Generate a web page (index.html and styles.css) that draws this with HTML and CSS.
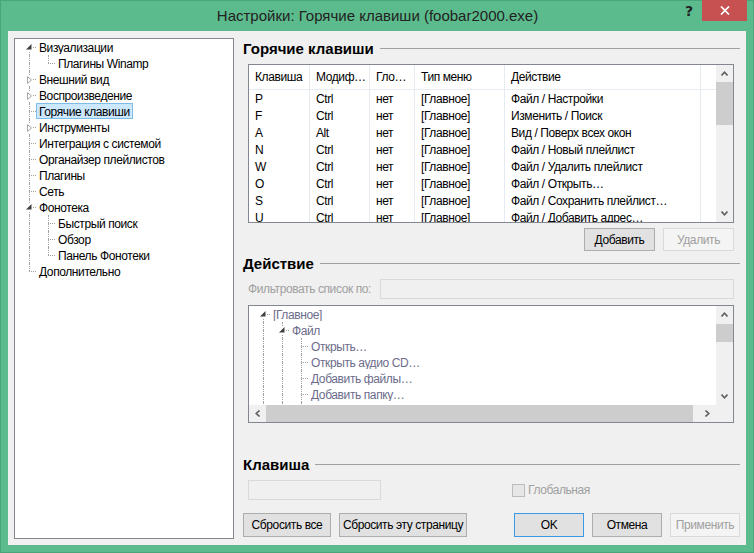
FILE: index.html
```html
<!DOCTYPE html>
<html lang="ru">
<head>
<meta charset="utf-8">
<title>Настройки: Горячие клавиши (foobar2000.exe)</title>
<link rel="stylesheet" href="styles.css">
</head>
<body>
<div class="window">
  <div class="titlebar">
    <div class="title">Настройки: Горячие клавиши (foobar2000.exe)</div>
    <div class="caption-btns">
      <div class="cap-help">?</div>
      <div class="cap-close"><svg width="10" height="9" viewBox="0 0 10 9"><path d="M1 0.5 L9 8.5 M9 0.5 L1 8.5" stroke="#fff" stroke-width="1.7" fill="none"/></svg></div>
    </div>
  </div>
  <div class="client">
    <div class="tree nav">
      <div class="trow"><span class="tc k f"><i class="a"></i><i class="b"></i><svg class="glyph" width="16" height="16" viewBox="0 0 16 16"><rect x="5" y="4" width="8" height="8" fill="#fff"/><path d="M11.5 5 L11.5 10.5 L6 10.5 Z" fill="#404040"/></svg></span><span class="lbl">Визуализации</span></div>
      <div class="trow"><span class="tc v"><i class="a"></i><i class="b"></i></span><span class="tc k l"><i class="a"></i><i class="b"></i></span><span class="lbl">Плагины Winamp</span></div>
      <div class="trow"><span class="tc k t"><i class="a"></i><i class="b"></i><svg class="glyph" width="16" height="16" viewBox="0 0 16 16"><rect x="5" y="4" width="8" height="10" fill="#fff"/><path d="M7.5 5.5 L7.5 12.5 L11.5 9 Z" fill="#fff" stroke="#a6a6a6" stroke-width="1"/></svg></span><span class="lbl">Внешний вид</span></div>
      <div class="trow"><span class="tc k t"><i class="a"></i><i class="b"></i><svg class="glyph" width="16" height="16" viewBox="0 0 16 16"><rect x="5" y="4" width="8" height="10" fill="#fff"/><path d="M7.5 5.5 L7.5 12.5 L11.5 9 Z" fill="#fff" stroke="#a6a6a6" stroke-width="1"/></svg></span><span class="lbl">Воспроизведение</span></div>
      <div class="trow"><span class="tc k t"><i class="a"></i><i class="b"></i></span><span class="lbl sel">Горячие клавиши</span></div>
      <div class="trow"><span class="tc k t"><i class="a"></i><i class="b"></i><svg class="glyph" width="16" height="16" viewBox="0 0 16 16"><rect x="5" y="4" width="8" height="10" fill="#fff"/><path d="M7.5 5.5 L7.5 12.5 L11.5 9 Z" fill="#fff" stroke="#a6a6a6" stroke-width="1"/></svg></span><span class="lbl">Инструменты</span></div>
      <div class="trow"><span class="tc k t"><i class="a"></i><i class="b"></i></span><span class="lbl">Интеграция с системой</span></div>
      <div class="trow"><span class="tc k t"><i class="a"></i><i class="b"></i></span><span class="lbl">Органайзер плейлистов</span></div>
      <div class="trow"><span class="tc k t"><i class="a"></i><i class="b"></i></span><span class="lbl">Плагины</span></div>
      <div class="trow"><span class="tc k t"><i class="a"></i><i class="b"></i></span><span class="lbl">Сеть</span></div>
      <div class="trow"><span class="tc k t"><i class="a"></i><i class="b"></i><svg class="glyph" width="16" height="16" viewBox="0 0 16 16"><rect x="5" y="4" width="8" height="8" fill="#fff"/><path d="M11.5 5 L11.5 10.5 L6 10.5 Z" fill="#404040"/></svg></span><span class="lbl">Фонотека</span></div>
      <div class="trow"><span class="tc v"><i class="a"></i><i class="b"></i></span><span class="tc k t"><i class="a"></i><i class="b"></i></span><span class="lbl">Быстрый поиск</span></div>
      <div class="trow"><span class="tc v"><i class="a"></i><i class="b"></i></span><span class="tc k t"><i class="a"></i><i class="b"></i></span><span class="lbl">Обзор</span></div>
      <div class="trow"><span class="tc v"><i class="a"></i><i class="b"></i></span><span class="tc k l"><i class="a"></i><i class="b"></i></span><span class="lbl">Панель Фонотеки</span></div>
      <div class="trow"><span class="tc k l"><i class="a"></i><i class="b"></i></span><span class="lbl">Дополнительно</span></div>
    </div>

    <div class="main">
      <div class="group-title">Горячие клавиши</div>
      <div class="listview">
        <div class="lv-body">
          <div class="lv-head">
            <div class="cell w1">Клавиша</div><div class="cell w2">Модиф…</div><div class="cell w3">Гло…</div><div class="cell w4">Тип меню</div><div class="cell w5">Действие</div>
          </div>
          <div class="lv-row"><div class="cell w1">P</div><div class="cell w2">Ctrl</div><div class="cell w3">нет</div><div class="cell w4">[Главное]</div><div class="cell w5">Файл / Настройки</div></div>
          <div class="lv-row"><div class="cell w1">F</div><div class="cell w2">Ctrl</div><div class="cell w3">нет</div><div class="cell w4">[Главное]</div><div class="cell w5">Изменить / Поиск</div></div>
          <div class="lv-row"><div class="cell w1">A</div><div class="cell w2">Alt</div><div class="cell w3">нет</div><div class="cell w4">[Главное]</div><div class="cell w5">Вид / Поверх всех окон</div></div>
          <div class="lv-row"><div class="cell w1">N</div><div class="cell w2">Ctrl</div><div class="cell w3">нет</div><div class="cell w4">[Главное]</div><div class="cell w5">Файл / Новый плейлист</div></div>
          <div class="lv-row"><div class="cell w1">W</div><div class="cell w2">Ctrl</div><div class="cell w3">нет</div><div class="cell w4">[Главное]</div><div class="cell w5">Файл / Удалить плейлист</div></div>
          <div class="lv-row"><div class="cell w1">O</div><div class="cell w2">Ctrl</div><div class="cell w3">нет</div><div class="cell w4">[Главное]</div><div class="cell w5">Файл / Открыть…</div></div>
          <div class="lv-row"><div class="cell w1">S</div><div class="cell w2">Ctrl</div><div class="cell w3">нет</div><div class="cell w4">[Главное]</div><div class="cell w5">Файл / Сохранить плейлист…</div></div>
          <div class="lv-row"><div class="cell w1">U</div><div class="cell w2">Ctrl</div><div class="cell w3">нет</div><div class="cell w4">[Главное]</div><div class="cell w5">Файл / Добавить адрес…</div></div>
        </div>
        <div class="vscroll">
          <div class="sb-btn"><svg width="7" height="5" viewBox="0 0 7 5"><path d="M0.5 4.5 L3.5 1.2 L6.5 4.5" fill="none" stroke="#606060" stroke-width="1.6"/></svg></div>
          <div class="thumb lv-thumb"></div>
          <div class="sb-fill"></div>
          <div class="sb-btn"><svg width="7" height="5" viewBox="0 0 7 5"><path d="M0.5 0.5 L3.5 3.8 L6.5 0.5" fill="none" stroke="#606060" stroke-width="1.6"/></svg></div>
        </div>
      </div>
      <div class="btn-row">
        <button class="btn">Добавить</button>
        <button class="btn disabled">Удалить</button>
      </div>

      <div class="group-title g2">Действие</div>
      <div class="filter">
        <span class="filter-label">Фильтровать список по:</span>
        <span class="input filter-input"></span>
      </div>
      <div class="tree2">
        <div class="tree t2">
          <div class="trow"><span class="tc k f"><i class="a"></i><i class="b"></i><svg class="glyph" width="16" height="16" viewBox="0 0 16 16"><rect x="5" y="4" width="8" height="8" fill="#fff"/><path d="M11.5 5 L11.5 10.5 L6 10.5 Z" fill="#404040"/></svg></span><span class="lbl">[Главное]</span></div>
          <div class="trow"><span class="tc v"><i class="a"></i><i class="b"></i></span><span class="tc k t"><i class="a"></i><i class="b"></i><svg class="glyph" width="16" height="16" viewBox="0 0 16 16"><rect x="5" y="4" width="8" height="8" fill="#fff"/><path d="M11.5 5 L11.5 10.5 L6 10.5 Z" fill="#404040"/></svg></span><span class="lbl">Файл</span></div>
          <div class="trow"><span class="tc v"><i class="a"></i><i class="b"></i></span><span class="tc v"><i class="a"></i><i class="b"></i></span><span class="tc k t"><i class="a"></i><i class="b"></i></span><span class="lbl">Открыть…</span></div>
          <div class="trow"><span class="tc v"><i class="a"></i><i class="b"></i></span><span class="tc v"><i class="a"></i><i class="b"></i></span><span class="tc k t"><i class="a"></i><i class="b"></i></span><span class="lbl">Открыть аудио CD…</span></div>
          <div class="trow"><span class="tc v"><i class="a"></i><i class="b"></i></span><span class="tc v"><i class="a"></i><i class="b"></i></span><span class="tc k t"><i class="a"></i><i class="b"></i></span><span class="lbl">Добавить файлы…</span></div>
          <div class="trow"><span class="tc v"><i class="a"></i><i class="b"></i></span><span class="tc v"><i class="a"></i><i class="b"></i></span><span class="tc k t"><i class="a"></i><i class="b"></i></span><span class="lbl">Добавить папку…</span></div>
          <div class="trow"><span class="tc v"><i class="a"></i><i class="b"></i></span><span class="tc v"><i class="a"></i><i class="b"></i></span><span class="tc k t"><i class="a"></i><i class="b"></i></span><span class="lbl">Добавить адрес…</span></div>
        </div>
        <div class="vscroll">
          <div class="sb-btn"><svg width="7" height="5" viewBox="0 0 7 5"><path d="M0.5 4.5 L3.5 1.2 L6.5 4.5" fill="none" stroke="#606060" stroke-width="1.6"/></svg></div>
          <div class="thumb t2-thumb"></div>
          <div class="sb-fill"></div>
          <div class="sb-btn"><svg width="7" height="5" viewBox="0 0 7 5"><path d="M0.5 0.5 L3.5 3.8 L6.5 0.5" fill="none" stroke="#606060" stroke-width="1.6"/></svg></div>
        </div>
        <div class="hscroll">
          <div class="sb-btn"><svg width="5" height="7" viewBox="0 0 5 7"><path d="M4.5 0.5 L1.2 3.5 L4.5 6.5" fill="none" stroke="#606060" stroke-width="1.6"/></svg></div>
          <div class="thumb h-thumb"></div>
          <div class="sb-fill"></div>
          <div class="sb-btn"><svg width="5" height="7" viewBox="0 0 5 7"><path d="M0.5 0.5 L3.8 3.5 L0.5 6.5" fill="none" stroke="#606060" stroke-width="1.6"/></svg></div>
        </div>
        <div class="corner"></div>
      </div>

      <div class="group-title g3">Клавиша</div>
      <div class="key-row">
        <span class="input key-input"></span>
        <span class="checkbox"></span>
        <span class="check-label">Глобальная</span>
      </div>

      <div class="bottom-row">
        <div class="btn-group">
          <button class="btn b-reset">Сбросить все</button>
          <button class="btn b-reset-page">Сбросить эту страницу</button>
        </div>
        <div class="btn-group">
          <button class="btn dlg default">OK</button>
          <button class="btn dlg">Отмена</button>
          <button class="btn dlg disabled">Применить</button>
        </div>
      </div>
    </div>
  </div>
</div>
</body>
</html>
```

FILE: styles.css
```css
* { box-sizing: border-box; }
html, body { margin: 0; padding: 0; }
body {
  width: 754px;
  height: 553px;
  overflow: hidden;
  font-family: "Liberation Sans", Arial, sans-serif;
  font-size: 12px;
  letter-spacing: -0.4px;
  color: #000;
  background: #fff;
}

.window {
  width: 754px;
  height: 553px;
  background: #5bbb8c;
  border: 1px solid #4aa57a;
  display: flex;
  flex-direction: column;
}

/* title bar */
.titlebar {
  height: 30px;
  flex: none;
  display: flex;
  align-items: flex-start;
}
.title {
  flex: 1;
  padding-left: 78px;
  text-align: center;
  font-size: 15px;
  letter-spacing: 0;
  line-height: 29px;
  color: #222;
  white-space: nowrap;
}
.caption-btns {
  display: flex;
  margin-top: -1px;
  margin-right: 6px;
}
.cap-help {
  width: 26px;
  height: 21px;
  text-align: center;
  font-weight: bold;
  font-size: 14px;
  letter-spacing: 0;
  line-height: 23px;
  color: #222;
  font-family: "DejaVu Sans", sans-serif;
}
.cap-close {
  width: 45px;
  height: 21px;
  background: #c75050;
  display: flex;
  align-items: center;
  justify-content: center;
}

/* client */
.client {
  flex: 1;
  margin: 0 7px 7px 7px;
  background: #f0f0f0;
  display: flex;
  gap: 9px;
  padding: 7px 6px 6px 6px;
}

/* tree views */
.nav {
  width: 220px;
  flex: none;
  border: 1px solid #828790;
  background: #fff;
}
.tree {
  padding-left: 5px;
  overflow: hidden;
}
.trow {
  display: flex;
  height: 16px;
  white-space: nowrap;
}
.tc {
  width: 19px;
  height: 16px;
  flex: none;
  display: flex;
  flex-direction: column;
  padding-left: 9px;
  position: relative;
}
.tc.k { width: 16px; }
.tc i { display: block; height: 8px; }
.tc.v i.a, .tc.v i.b,
.tc.t i.a, .tc.t i.b,
.tc.l i.a,
.tc.f i.b { border-left: 1px dotted #a0a0a0; }
.tc.t i.b, .tc.l i.b, .tc.f i.b { border-top: 1px dotted #a0a0a0; }
.glyph {
  position: absolute;
  left: 0;
  top: 0;
}
.lbl {
  display: block;
  height: 16px;
  line-height: 16px;
  padding: 0 2px;
  border: 1px solid transparent;
  overflow: hidden;
}
.lbl.sel {
  background: #cce8ff;
  border-color: #7fbce9;
}
.t2 .lbl { color: #6c6c8a; }

/* main column */
.main {
  width: 497px;
  flex: none;
  display: flex;
  flex-direction: column;
}
.group-title {
  display: flex;
  align-items: center;
  height: 18px;
  margin-top: 1px;
  font-size: 15px;
  font-weight: bold;
  letter-spacing: 0;
  white-space: nowrap;
}
.group-title::after {
  content: "";
  flex: 1;
  border-top: 1px solid #a0a0a0;
  margin-left: 6px;
  margin-top: 1px;
}
.group-title.g2 { margin-top: 3px; }
.group-title.g3 { margin-top: 32px; }

/* list view */
.listview {
  margin: 7px 6px 0 5px;
  height: 159px;
  border: 1px solid #828790;
  background: #fff;
  display: flex;
}
.lv-body {
  flex: 1;
  overflow: hidden;
}
.lv-head {
  display: flex;
  height: 25px;
  border-bottom: 1px solid #e7ecf3;
}
.lv-head .cell { line-height: 25px; }
.lv-row {
  display: flex;
  height: 17px;
  line-height: 19px;
}
.cell {
  padding-left: 6px;
  border-right: 1px solid #e6ebf2;
  white-space: nowrap;
  overflow: hidden;
  flex: none;
}
.w1 { width: 61px; }
.w2 { width: 60px; }
.w3 { width: 45px; }
.w4 { width: 90px; }
.w5 { width: 196px; }

/* scrollbars */
.vscroll {
  width: 17px;
  flex: none;
  background: #f0f0f0;
  display: flex;
  flex-direction: column;
}
.hscroll {
  height: 17px;
  background: #f0f0f0;
  display: flex;
}
.sb-btn {
  width: 17px;
  height: 17px;
  flex: none;
  display: flex;
  align-items: center;
  justify-content: center;
}
.sb-fill { flex: 1; }
.thumb { background: #cdcdcd; flex: none; }
.lv-thumb { height: 43px; }
.t2-thumb { height: 18px; margin-top: 1px; }
.h-thumb { width: 427px; }
.corner { background: #f0f0f0; }

/* buttons */
.btn-row {
  display: flex;
  justify-content: flex-end;
  gap: 8px;
  margin: 5px 6px 0 5px;
}
.btn {
  height: 23px;
  width: 71px;
  padding: 0;
  border: 1px solid #adadad;
  background: #e1e1e1;
  font-family: "Liberation Sans", Arial, sans-serif;
  font-size: 12px;
  letter-spacing: -0.4px;
  color: #000;
  white-space: nowrap;
}
.btn.disabled {
  background: #f4f4f4;
  border-color: #d9d9d9;
  color: #a0a0a0;
}
.btn.default { border-color: #3c99e6; }

/* filter */
.filter {
  display: flex;
  align-items: center;
  height: 20px;
  margin: 7px 6px 0 5px;
}
.filter-label {
  width: 132px;
  flex: none;
  color: #a0a0a0;
  white-space: nowrap;
}
.input {
  display: block;
  height: 20px;
  background: #f0f0f0;
  border: 1px solid #d9d9d9;
}
.filter-input { flex: 1; }

.tree2 {
  margin: 6px 6px 0 5px;
  height: 118px;
  border: 1px solid #828790;
  background: #fff;
  display: grid;
  grid-template-columns: 1fr 17px;
  grid-template-rows: 1fr 17px;
}

/* key row */
.key-row {
  display: flex;
  align-items: center;
  height: 20px;
  margin: 7px 0 0 5px;
}
.key-input { width: 133px; }
.checkbox {
  width: 13px;
  height: 13px;
  margin-left: 131px;
  border: 1px solid #bcbcbc;
  background: #e6e6e6;
}
.check-label {
  margin-left: 3px;
  color: #a0a0a0;
}

.bottom-row {
  display: flex;
  justify-content: space-between;
  margin-top: 13px;
}
.btn-group {
  display: flex;
  gap: 8px;
}
.bottom-row .btn { height: 24px; }
.btn.dlg { width: 70px; }
.btn.b-reset { width: 88px; }
.btn.b-reset-page { width: 128px; }
```
